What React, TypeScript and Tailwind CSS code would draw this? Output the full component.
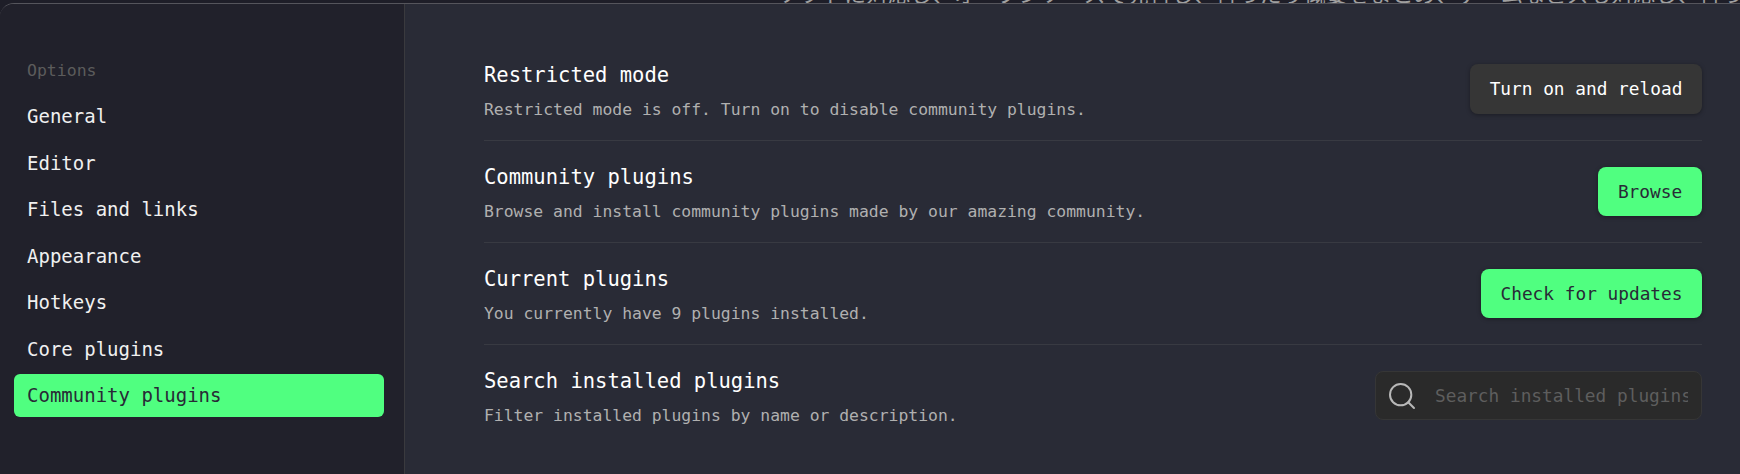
import { Search } from "lucide-react";

const NAV_ITEMS = ["General", "Editor", "Files and links", "Appearance", "Hotkeys", "Core plugins", "Community plugins"];

const ROWS = [
  { title: "Restricted mode", desc: "Restricted mode is off. Turn on to disable community plugins." },
  { title: "Community plugins", desc: "Browse and install community plugins made by our amazing community." },
  { title: "Current plugins", desc: "You currently have 9 plugins installed." },
  { title: "Search installed plugins", desc: "Filter installed plugins by name or description." },
];

function RowControl({ index }: { index: number }) {
  if (index === 0) {
    return (
      <button className="h-[50px] w-[232px] rounded-[8px] bg-[#363636] pt-[1px] text-center text-[17.8px] text-white shadow-[0_1px_4px_rgba(0,0,0,0.35)]">
        Turn on and reload
      </button>
    );
  }
  if (index === 1) {
    return (
      <button className="h-[49px] w-[104px] rounded-[8px] bg-[#50ff80] pt-[1px] text-center text-[17.8px] text-[#282a36] shadow-[0_1px_4px_rgba(0,0,0,0.35)]">
        Browse
      </button>
    );
  }
  if (index === 2) {
    return (
      <button className="h-[49px] w-[221px] rounded-[8px] bg-[#50ff80] pt-[1px] text-center text-[17.8px] text-[#282a36] shadow-[0_1px_4px_rgba(0,0,0,0.35)]">
        Check for updates
      </button>
    );
  }
  return (
    <div className="flex h-[49px] w-[327px] items-center rounded-[8px] border border-[#363636] bg-[#2a2a2a] pl-[10px] pr-[13px]">
      <Search className="h-[32px] w-[32px] shrink-0 text-[#b8b8b8]" strokeWidth={1.5} />
      <span className="ml-[17px] overflow-hidden whitespace-nowrap pt-[2px] text-[17.8px] text-[#5e5e5e]">Search installed plugins</span>
    </div>
  );
}

export default function App() {
  return (
    <div
      className="flex h-[474px] w-[1740px] flex-col overflow-hidden bg-[#1e1e28]"
      style={{ fontFamily: '"DejaVu Sans Mono", "Noto Sans CJK JP", monospace' }}
    >
      {/* clipped text of the page behind the dialog */}
      <div className="flex h-[3px] items-end overflow-hidden pl-[778px]">
        <span className="whitespace-nowrap text-[22px] leading-[22px] text-[#a0a0a0]" style={{ fontFamily: '"Noto Sans CJK JP", sans-serif' }}>
          ソフトに対応し、オープンソースで発行し、行ったり概要をまとめ、ゲームなどズも対応し、行ったり概要
        </span>
      </div>

      <div className="flex min-h-0 flex-1 overflow-hidden rounded-tl-[14px] border-t border-[#55555c]">
        <aside className="h-full w-[405px] shrink-0 border-r border-[#3a3a3e] bg-[#21212b] pl-[14px] pr-[20px] pt-[48px]">
          <div className="mb-[5px] pl-[13px] text-[16.5px] font-medium leading-[38px] text-[#5c5c5c]">Options</div>
          {NAV_ITEMS.map((item) => (
            <div
              key={item}
              className={`mb-[3.5px] flex h-[43px] items-center rounded-[6px] pl-[13px] text-[19px] ${
                item === "Community plugins" ? "bg-[#50ff80] text-[#282a36]" : "text-[#f0f0f0]"
              }`}
            >
              {item}
            </div>
          ))}
        </aside>

        <main className="min-w-0 flex-1 bg-[#292b36] pl-[79px] pr-[38px] pt-[34px]">
          {ROWS.map((row, i) => (
            <div key={row.title} className={`flex h-[102px] items-center justify-between ${i > 0 ? "border-t border-[#383a42]" : ""}`}>
              <div className="pt-[3px]">
                <div className="text-[20.5px] leading-[28px] text-white">{row.title}</div>
                <div className="mt-[10px] text-[16.4px] leading-[22px] text-[#b0b0b0]">{row.desc}</div>
              </div>
              <RowControl index={i} />
            </div>
          ))}
        </main>
      </div>
    </div>
  );
}
